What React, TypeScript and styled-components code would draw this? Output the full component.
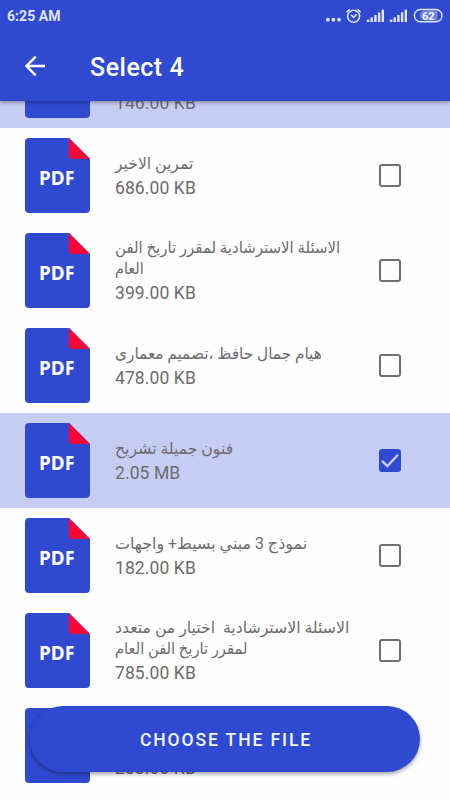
import React from "react";
import styled, { createGlobalStyle } from "styled-components";

const BLUE = "#2f4ad0";

const GlobalStyle = createGlobalStyle`
  * { box-sizing: border-box; }
  body { margin: 0; background: #fefefe; font-family: Roboto, "DejaVu Sans", sans-serif; }
`;

const Screen = styled.main`
  position: relative;
  display: flex;
  flex-direction: column;
  width: 450px;
  height: 800px;
  overflow: hidden;
  background: #fefefe;
`;

const Header = styled.header`
  flex: none;
  height: 101px;
  z-index: 1;
  background: ${BLUE};
  box-shadow: 0 1px 4px rgba(0, 0, 0, 0.42);
`;

const StatusBar = styled.div`
  display: flex;
  align-items: center;
  justify-content: space-between;
  height: 32px;
  padding: 0 7px;
  color: #dfe4fa;
`;

const Clock = styled.span`
  font-size: 14px;
  line-height: 32px;
  font-weight: 700;
  letter-spacing: 0.05px;
`;

const Toolbar = styled.div`
  display: flex;
  align-items: center;
  gap: 44px;
  height: 69px;
  padding: 2px 24px 0 24px;
`;

const BackButton = styled.button`
  display: flex;
  margin-top: -3px;
  padding: 0;
  border: 0;
  background: none;
`;

const Title = styled.h1`
  margin: 0;
  color: #fff;
  font-size: 25px;
  line-height: 32px;
  font-weight: 500;
  letter-spacing: 0.5px;
`;

const FileList = styled.ul`
  flex: none;
  margin: -68px 0 0;
  padding: 0;
  list-style: none;
`;

const FileRow = styled.li<{ $selected?: boolean }>`
  display: flex;
  align-items: center;
  height: 95px;
  padding: 0 49px 0 25px;
  background: ${(p) => (p.$selected ? "#c6cdf2" : "transparent")};
`;

const FileInfo = styled.div`
  flex: 1;
  min-width: 0;
  margin-left: 25px;
  color: #6c6c6e;
`;

const FileName = styled.div<{ $stretch: number }>`
  direction: rtl;
  height: 21px;
  text-align: left;
  white-space: pre;
  font-size: 16px;
  line-height: 21px;
  transform: scaleX(${(p) => p.$stretch});
  transform-origin: left center;
`;

const FileSize = styled.div`
  margin-top: 4px;
  font-size: 17.5px;
  line-height: 21px;
  letter-spacing: 0.1px;
`;

const Checkbox = styled.span<{ $checked?: boolean }>`
  display: flex;
  flex: none;
  width: 22px;
  height: 23px;
  border: 2px solid ${(p) => (p.$checked ? BLUE : "#6f6f6f")};
  border-radius: 3px;
  background: ${(p) => (p.$checked ? BLUE : "transparent")};
`;

const ChooseButton = styled.button`
  position: absolute;
  z-index: 2;
  left: 30px;
  bottom: 28px;
  width: 390px;
  height: 66px;
  padding: 2px 0 0 2px;
  border: 0;
  border-radius: 33px;
  background: ${BLUE};
  box-shadow: 0 2px 4px rgba(0, 0, 0, 0.36);
  color: #f4f6ff;
  font-family: Roboto, sans-serif;
  font-size: 17.5px;
  font-weight: 500;
  letter-spacing: 1.9px;
`;

const StatusIcons = () => (
  <svg width="120" height="32" viewBox="323 0 120 32" fill="none" stroke="#dfe4fa">
    <g fill="#dfe4fa" stroke="none">
      <circle cx="327.8" cy="19.7" r="1.9" />
      <circle cx="333.4" cy="19.7" r="1.9" />
      <circle cx="339" cy="19.7" r="1.9" />
    </g>
    <circle cx="353.6" cy="16.3" r="6" strokeWidth="1.5" />
    <path d="M346.5 12.2l3.2-3M360.7 12.2l-3.2-3M351 14.8l2.6 2.6 3-3" strokeWidth="1.5" />
    {[366.8, 389.8].map((x) => (
      <g key={x} fill="#dfe4fa" stroke="none">
        <rect x={x} y="19.6" width="2.6" height="2.4" />
        <rect x={x + 3.7} y="17.4" width="2.4" height="4.6" />
        <rect x={x + 7.4} y="15" width="2.4" height="7" />
        <rect x={x + 11.1} y="12.4" width="2.4" height="9.6" />
        <rect x={x + 14.8} y="9.6" width="2.4" height="12.4" />
      </g>
    ))}
    <path d="M420 10.5h12.5v10h-12.5a5 5 0 0 1 0-10" transform="translate(5 0)" fill="#7083df" stroke="none" />
    <rect x="414.4" y="9.5" width="27.6" height="12.3" rx="6.1" strokeWidth="1.4" />
    <text x="428.2" y="19.7" textAnchor="middle" fontFamily="Roboto" fontSize="11" fontWeight="700" fill="#f4f6ff" stroke="none">62</text>
  </svg>
);

const PdfIcon = () => (
  <svg width="65" height="75" viewBox="0 0 65 75">
    <path d="M4 0H44L65 21V71a4 4 0 0 1-4 4H4a4 4 0 0 1-4-4V4a4 4 0 0 1 4-4Z" fill={BLUE} />
    <path d="M44 0 65 21H48a4 4 0 0 1-4-4Z" fill="#fa0535" />
    <svg width="48.7" height="75">
      <text x="14.1" y="46.6" fontFamily="Noto Sans" fontSize="19.4" fontWeight="700" fill="#fff" textLength="36" lengthAdjust="spacingAndGlyphs">PDF</text>
    </svg>
  </svg>
);

type NameLine = { text: string; stretch: number };
type FileItem = { lines: NameLine[]; size: string; selected?: boolean };

const files: FileItem[] = [
  {
    lines: [
      { text: "الاسئلة الاسترشادية", stretch: 0.935 },
      { text: "العام", stretch: 0.9 },
    ],
    size: "146.00 KB",
    selected: true,
  },
  { lines: [{ text: "تمرين الاخير", stretch: 0.975 }], size: "686.00 KB" },
  {
    lines: [
      { text: "الاسئلة الاسترشادية لمقرر تاريخ الفن", stretch: 0.935 },
      { text: "العام", stretch: 0.9 },
    ],
    size: "399.00 KB",
  },
  { lines: [{ text: "هيام جمال حافظ ،تصميم معمارى", stretch: 0.957 }], size: "478.00 KB" },
  { lines: [{ text: "فنون جميلة تشريح", stretch: 0.98 }], size: "2.05 MB", selected: true },
  { lines: [{ text: "نموذج 3 مبني بسيط+ واجهات", stretch: 0.995 }], size: "182.00 KB" },
  {
    lines: [
      { text: "الاسئلة الاسترشادية  اختيار من متعدد", stretch: 0.982 },
      { text: "لمقرر تاريخ الفن العام", stretch: 0.92 },
    ],
    size: "785.00 KB",
  },
  {
    lines: [
      { text: "الاسئلة الاسترشادية", stretch: 0.935 },
      { text: "العام", stretch: 0.9 },
    ],
    size: "233.00 KB",
  },
];

export default function App() {
  return (
    <Screen>
      <GlobalStyle />
      <Header>
        <StatusBar>
          <Clock>6:25 AM</Clock>
          <StatusIcons />
        </StatusBar>
        <Toolbar>
          <BackButton aria-label="Back">
            <svg width="22" height="22" viewBox="0 0 22 22" fill="none" stroke="#fff" strokeWidth="2.4">
              <path d="M21 11H3M11.7 1.7 2.4 11l9.3 9.3" />
            </svg>
          </BackButton>
          <Title>Select 4</Title>
        </Toolbar>
      </Header>
      <FileList>
        {files.map((file) => (
          <FileRow key={file.size} $selected={file.selected}>
            <PdfIcon />
            <FileInfo>
              {file.lines.map((line) => (
                <FileName key={line.text} $stretch={line.stretch}>
                  {line.text}
                </FileName>
              ))}
              <FileSize>{file.size}</FileSize>
            </FileInfo>
            <Checkbox $checked={file.selected}>
              {file.selected && (
                <svg width="18" height="19" viewBox="0 0 18 19" fill="none" stroke="#c6cdf2" strokeWidth="2.4">
                  <path d="M1 9.8 6.4 15 17 3.8" />
                </svg>
              )}
            </Checkbox>
          </FileRow>
        ))}
      </FileList>
      <ChooseButton>CHOOSE THE FILE</ChooseButton>
    </Screen>
  );
}
